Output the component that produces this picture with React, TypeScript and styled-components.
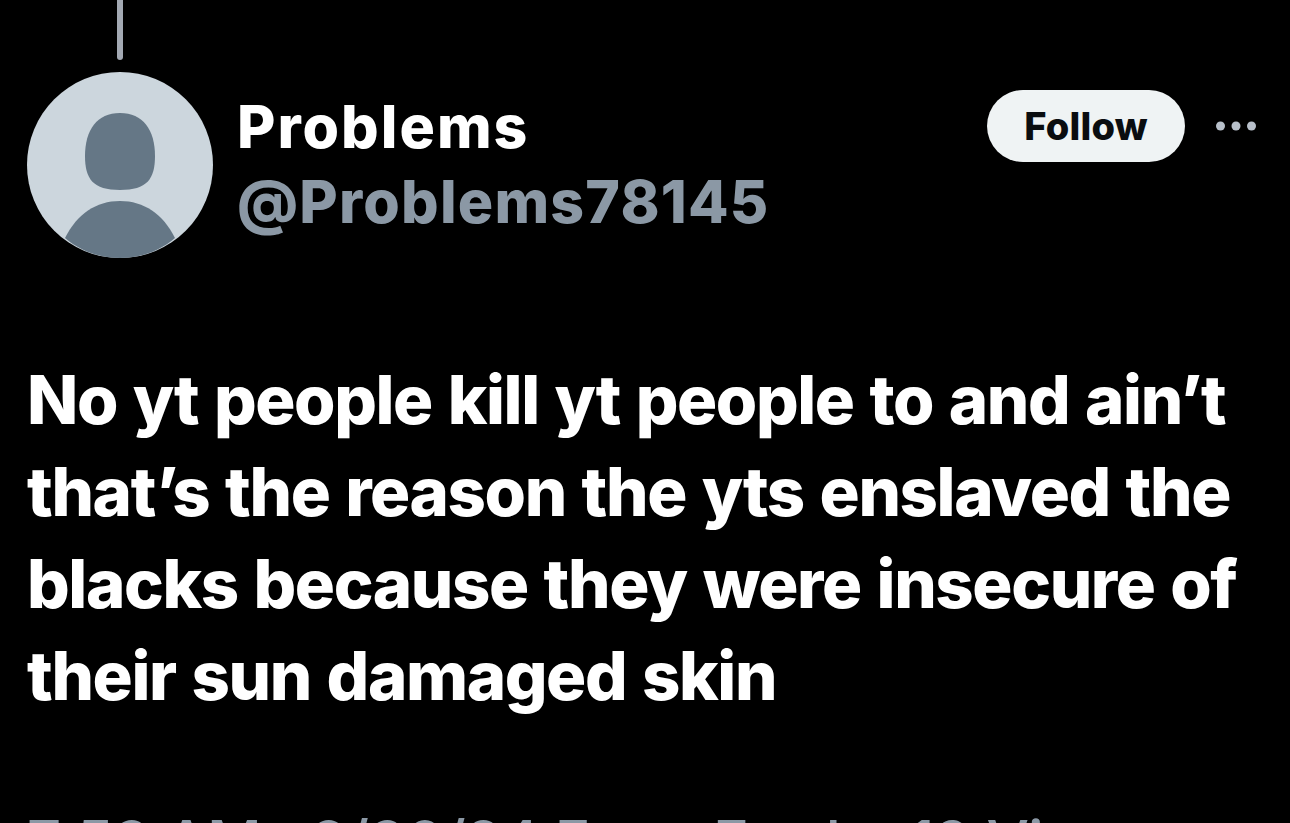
import React from "react";
import styled, { createGlobalStyle } from "styled-components";

const GlobalStyle = createGlobalStyle`
  html, body {
    margin: 0;
    padding: 0;
    background: #000;
    overflow: hidden;
  }
`;

const Page = styled.div`
  width: 1290px;
  height: 823px;
  overflow: hidden;
  background: #000;
  color: #fff;
  font-family: Inter, "Noto Sans", sans-serif;
  display: flex;
  flex-direction: column;
  padding: 0 27px;
  box-sizing: border-box;
`;

const Thread = styled.div`
  flex: none;
  width: 6px;
  height: 60px;
  margin-left: 90px;
  background: #a3a9b3;
  border-radius: 0 0 3px 3px;
`;

const Header = styled.div`
  flex: none;
  display: flex;
  align-items: flex-start;
  margin-top: 12px;
`;

const Avatar = styled.svg`
  width: 186px;
  height: 186px;
  flex: none;
  display: block;
`;

const Names = styled.div`
  display: flex;
  flex-direction: column;
  margin-left: 24px;
  margin-top: 20px;
  flex: 1;
`;

const DisplayName = styled.div`
  font-size: 59px;
  line-height: 70px;
  font-weight: 800;
  letter-spacing: 2px;
`;

const Handle = styled.div`
  font-size: 59px;
  line-height: 70px;
  font-weight: 800;
  letter-spacing: 1.2px;
  color: #8b98a5;
  margin-top: 5px;
`;

const Actions = styled.div`
  display: flex;
  align-items: center;
  margin-top: 18px;
`;

const FollowButton = styled.button`
  width: 198px;
  height: 72px;
  border: 0;
  border-radius: 36px;
  background: #eff3f4;
  color: #0a0d10;
  font-family: inherit;
  font-size: 38px;
  font-weight: 800;
  letter-spacing: 0.2px;
  padding: 0;
`;

const More = styled.svg`
  width: 40px;
  height: 10px;
  margin-left: 31px;
  margin-right: 7px;
  display: block;
`;

const Body = styled.div`
  flex: none;
  margin-top: 96px;
  font-size: 67px;
  line-height: 92px;
  font-weight: 800;
  letter-spacing: -1.4px;
  word-spacing: 2.5px;
  white-space: pre-line;
`;

const Meta = styled.div`
  flex: none;
  margin-top: 85px;
  font-size: 60px;
  line-height: 70px;
  font-weight: 500;
  letter-spacing: -0.6px;
  color: #8b98a5;
  white-space: nowrap;
`;

const App: React.FC = () => (
  <>
    <GlobalStyle />
    <Page>
      <Thread />
      <Header>
        <Avatar viewBox="0 0 186 186">
          <circle cx="93" cy="93" r="93" fill="#ccd6dd" />
          <path d="M93 41c-23 0-35 17-35 43 0 23 8 34 35 34s35-11 35-34c0-26-12-43-35-43z" fill="#657786" />
          <path d="M38 166c12-24 31-37 55-37s43 13 55 37c-15 13-35 20-55 20s-40-7-55-20z" fill="#657786" />
        </Avatar>
        <Names>
          <DisplayName>Problems</DisplayName>
          <Handle>@Problems78145</Handle>
        </Names>
        <Actions>
          <FollowButton>Follow</FollowButton>
          <More viewBox="0 0 40 10">
            <circle cx="4.5" cy="5" r="4.5" fill="#b8c0ca" />
            <circle cx="20" cy="5" r="4.5" fill="#b8c0ca" />
            <circle cx="35.5" cy="5" r="4.5" fill="#b8c0ca" />
          </More>
        </Actions>
      </Header>
      <Body>{"No yt people kill yt people to and ain’t\nthat’s the reason the yts enslaved the\nblacks because they were insecure of\ntheir sun damaged skin"}</Body>
      <Meta>7:53 AM · 8/30/24 From Earth · 19 Views</Meta>
    </Page>
  </>
);

export default App;
